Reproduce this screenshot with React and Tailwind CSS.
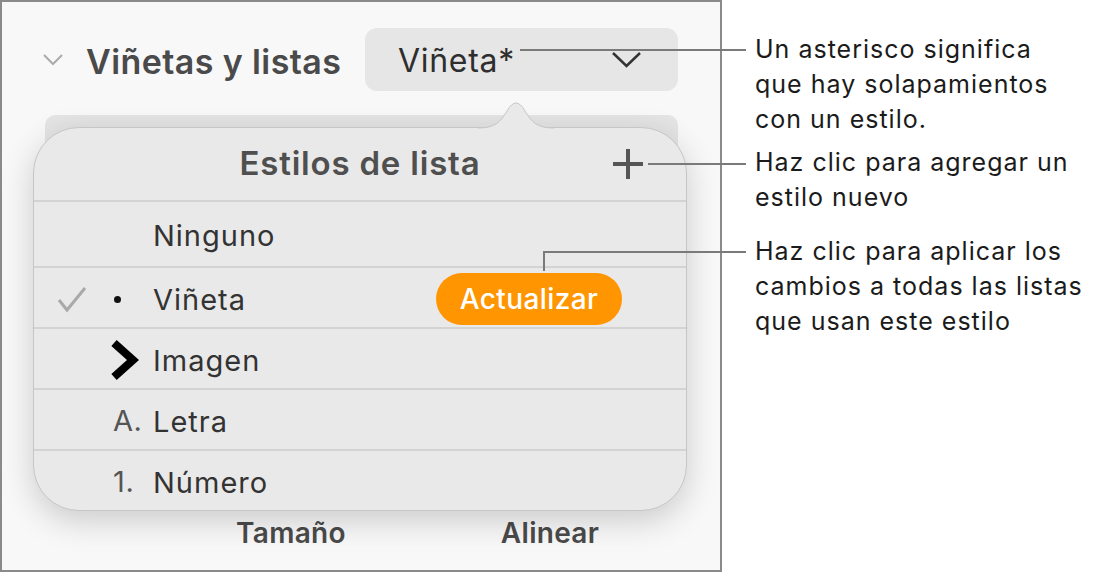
import React from "react";

const rows = [
  { label: "Ninguno", h: "h-[66px]" },
  { label: "Viñeta", h: "h-[61px]", marker: "bullet", checked: true, update: true },
  { label: "Imagen", h: "h-[61px]", marker: "image" },
  { label: "Letra", h: "h-[61px]", marker: "A." },
  { label: "Número", h: "h-[61px]", marker: "1." },
];

function Marker({ type }) {
  if (type === "bullet") {
    return <span className="ml-[1px] block h-[7px] w-[7px] rounded-full bg-[#111]" />;
  }
  if (type === "image") {
    return (
      <svg width="28" height="42" viewBox="0 0 28 42" className="-ml-[2px]">
        <polyline points="3,4 22,21 3,38" fill="none" stroke="#000" strokeWidth="8" strokeLinejoin="miter" />
      </svg>
    );
  }
  if (type) {
    return <span className="text-[29px] tracking-[0.6px] text-[#555]">{type}</span>;
  }
  return null;
}

export default function App() {
  return (
    <div className="relative flex h-[572px] w-[1099px] bg-white font-['Inter','Noto_Sans',sans-serif]">
      {/* inspector panel */}
      <div className="relative h-[572px] w-[722px] shrink-0 border-2 border-[#8a8a8a] bg-[#f8f8f8]">
        <div className="absolute left-[43px] top-[113px] h-[40px] w-[633px] rounded-[10px] bg-[#e4e4e4]" />

        <div className="mt-[26px] flex h-[63px] items-center">
          <svg width="22" height="13" viewBox="0 0 22 13" className="ml-[40px]">
            <polyline points="2,2 11,11 20,2" fill="none" stroke="#ababab" strokeWidth="2" />
          </svg>
          <span className="ml-[22px] pt-[3px] text-[34px] font-semibold tracking-[0.4px] text-[#4a4a4a]">Viñetas y listas</span>
          <div className="ml-auto mr-[42px] flex h-[63px] w-[313px] items-center justify-between rounded-[12px] bg-[#e6e6e6] pl-[33px] pr-[36px]">
            <span className="pt-[3px] text-[32px] tracking-[0.7px] text-[#2e2e2e]">Viñeta*</span>
            <svg width="31" height="17" viewBox="0 0 31 17">
              <polyline points="2,2 15.5,15 29,2" fill="none" stroke="#333" strokeWidth="2.5" />
            </svg>
          </div>
        </div>

        {/* popover */}
        <div className="relative ml-[31px] mt-[36px] w-[654px] rounded-[46px] border border-[#c6c6c6] bg-[#e9e9e9] shadow-[0_10px_32px_rgba(0,0,0,0.18)]">
          <svg width="76" height="32" viewBox="0 0 76 32" className="absolute left-[444px] top-[-31px]">
            <path d="M0 31 C16 31 22 26 29 14 Q38 -2 47 14 C54 26 60 31 76 31 L76 32 L0 32 Z" fill="#e9e9e9" />
            <path d="M0 31 C16 31 22 26 29 14 Q38 -2 47 14 C54 26 60 31 76 31" fill="none" stroke="#c6c6c6" strokeWidth="1" />
          </svg>
          <div className="grid h-[72px] grid-cols-[1fr_auto_1fr] items-center">
            <span />
            <span className="text-[33px] font-semibold tracking-[0.8px] text-[#4f4f4f]">Estilos de lista</span>
            <svg width="32" height="32" viewBox="0 0 32 32" className="mr-[42px] justify-self-end">
              <path d="M16 1 V31 M1 16 H31" stroke="#555" strokeWidth="4" />
            </svg>
          </div>
          {rows.map((r) => (
            <div key={r.label} className={`flex ${r.h} items-center border-t-2 border-[#d3d3d3] pl-[23px]`}>
              <div className="flex w-[56px] items-center pt-[2px]">
                {r.checked && (
                  <svg width="30" height="28" viewBox="0 0 30 28">
                    <polyline points="2,15 10,25 28,3" fill="none" stroke="#a9a9a9" strokeWidth="3" />
                  </svg>
                )}
              </div>
              <div className="flex w-[40px] items-center pt-[3px]">
                <Marker type={r.marker} />
              </div>
              <span className="pt-[4px] text-[29px] tracking-[1px] text-[#333]">{r.label}</span>
              {r.update && (
                <span className="ml-auto mr-[64px] mt-[3px] flex h-[52px] w-[186px] items-center justify-center rounded-full bg-[#ff9500] text-[28px] font-medium tracking-[0.4px] text-white">
                  Actualizar
                </span>
              )}
            </div>
          ))}
        </div>

        <div className="mt-[8px] flex text-[28px] font-semibold leading-none tracking-[0.3px] text-[#4a4a4a]">
          <span className="ml-[189px] w-[200px] text-center">Tamaño</span>
          <span className="ml-[59px] w-[200px] text-center">Alinear</span>
        </div>
      </div>

      {/* callouts */}
      <div className="pl-[33px] text-[25px] leading-[35px] tracking-[1px] text-[#1b1b1b]">
        <p className="mt-[32px]">
          Un asterisco significa
          <br />
          que hay solapamientos
          <br />
          con un estilo.
        </p>
        <p className="mt-[8px]">
          Haz clic para agregar un
          <br />
          estilo nuevo
        </p>
        <p className="mt-[19px]">
          Haz clic para aplicar los
          <br />
          cambios a todas las listas
          <br />
          que usan este estilo
        </p>
      </div>

      <svg className="pointer-events-none absolute left-0 top-0" width="1099" height="572">
        <g fill="none" stroke="#7a7a7a" strokeWidth="2">
          <path d="M520 50 H746" />
          <path d="M648 164 H746" />
          <path d="M544 271 V252 H746" />
        </g>
      </svg>
    </div>
  );
}
